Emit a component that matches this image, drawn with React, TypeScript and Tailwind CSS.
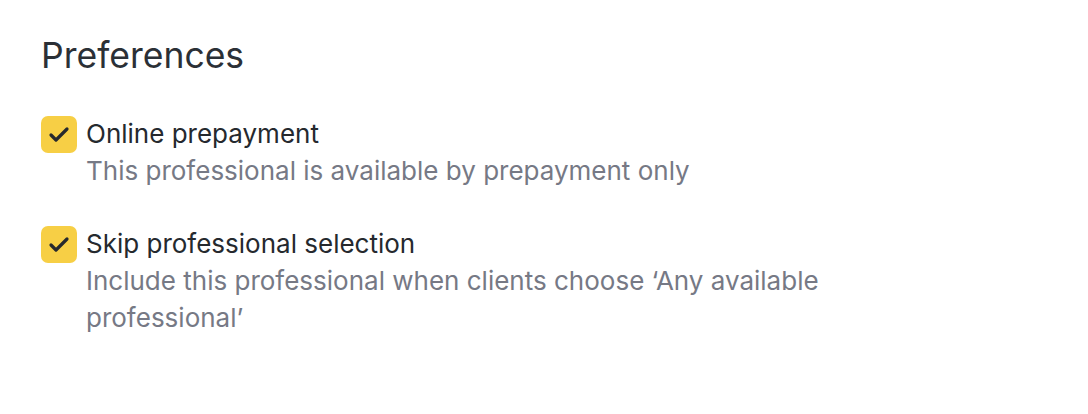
import { Check } from "lucide-react";

type Pref = {
  title: string;
  description: string;
};

const prefs: Pref[] = [
  {
    title: "Online prepayment",
    description: "This professional is available by prepayment only",
  },
  {
    title: "Skip professional selection",
    description:
      "Include this professional when clients choose \u2018Any available professional\u2019",
  },
];

function PrefRow({ pref }: { pref: Pref }) {
  return (
    <label className="flex items-start gap-[9px]">
      <span className="mt-[1px] flex h-[37px] w-[36px] shrink-0 items-center justify-center rounded-[7px] bg-[#f7cf45]">
        <Check className="h-[24px] w-[24px] text-[#26292d]" strokeWidth={3.2} />
      </span>
      <span className="flex max-w-[760px] flex-col">
        <span className="text-[26px] leading-[37px] text-[#25292e]">{pref.title}</span>
        <span className="text-[26px] leading-[37px] text-[#767985]">{pref.description}</span>
      </span>
    </label>
  );
}

export default function App() {
  return (
    <div className="min-h-[414px] w-full bg-white px-[41px] pt-[33px] font-['Inter',sans-serif]">
      <h2 className="text-[35.5px] leading-[46px] text-[#2b3036]">Preferences</h2>
      <div className="mt-[36px] flex flex-col gap-[36px]">
        {prefs.map((p) => (
          <PrefRow key={p.title} pref={p} />
        ))}
      </div>
    </div>
  );
}
